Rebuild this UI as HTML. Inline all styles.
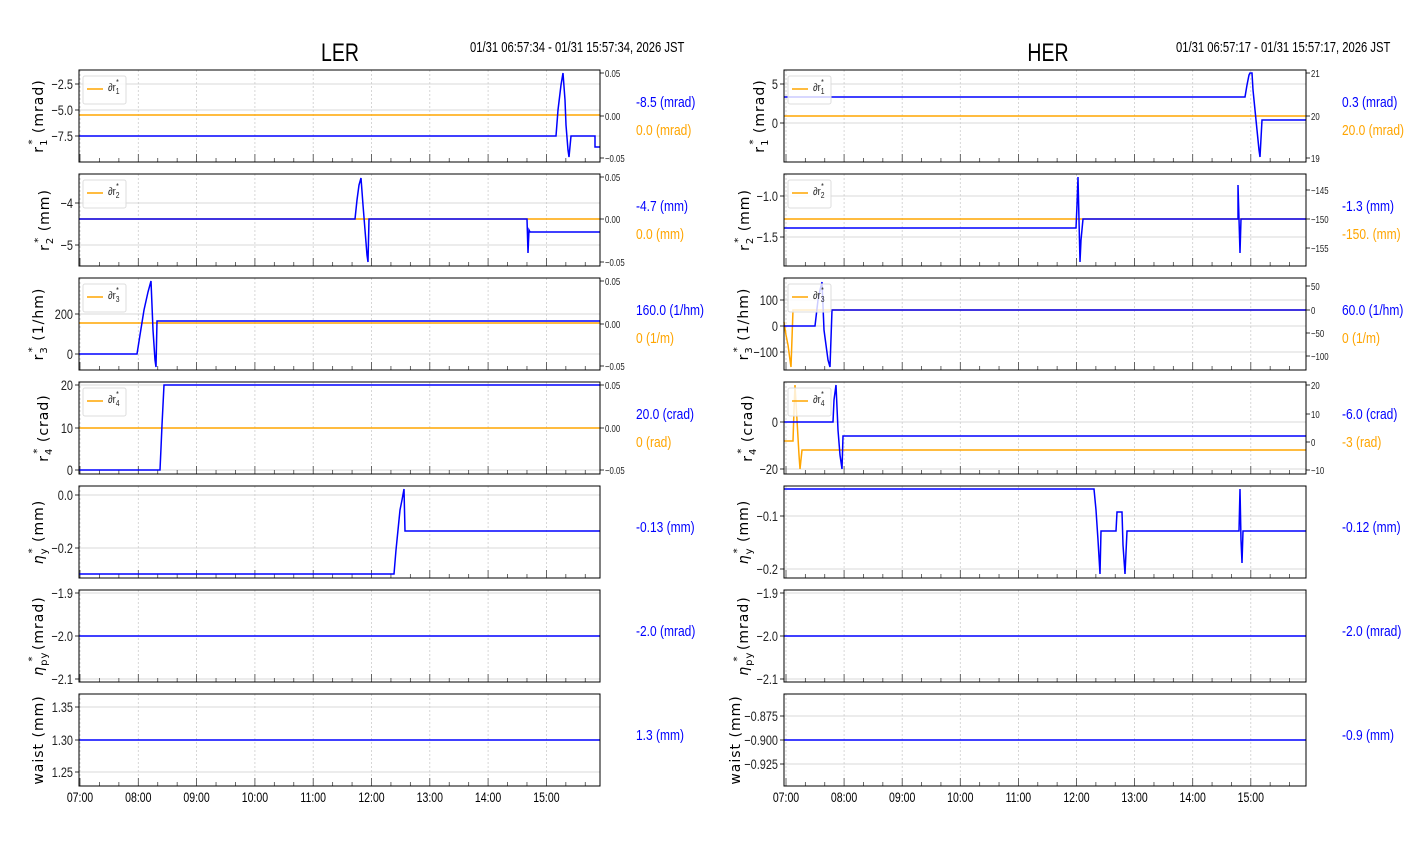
<!DOCTYPE html>
<html><head><meta charset="utf-8"><style>
html,body{margin:0;padding:0;background:#fff;width:1412px;height:864px;overflow:hidden}
svg text{font-family:"Liberation Sans",sans-serif}
</style></head><body>
<svg id="s" width="1412" height="864" xmlns="http://www.w3.org/2000/svg"></svg>
<script>
var o='';
function T(x,y,t,sz,fill,anchor,extra){o+='<text x="'+x+'" y="'+y+'" font-size="'+sz+'" fill="'+(fill||'#000')+'" text-anchor="'+(anchor||'start')+'" '+(extra||'')+'>'+t+'</text>';}
function S(x,y,k){return 'transform="translate('+x+','+y+') scale('+k+',1) translate('+(-x)+','+(-y)+')"';}
var H=92;
function panel(x0,x1,top,ly,ry,blue,orange,legend,vals,ylab,t7,hw,xl){
  var y1=top+H;
  for(var h=0;h<9;h++){var x=t7+h*hw;o+='<line x1="'+x+'" y1="'+top+'" x2="'+x+'" y2="'+y1+'" stroke="#ccc" stroke-width="0.8" stroke-dasharray="2,2"/>';}
  ly.forEach(function(a){o+='<line x1="'+x0+'" y1="'+a[0]+'" x2="'+x1+'" y2="'+a[0]+'" stroke="#ccc" stroke-width="0.8"/>';
    o+='<line x1="'+(x0-4)+'" y1="'+a[0]+'" x2="'+x0+'" y2="'+a[0]+'" stroke="#000" stroke-width="0.8"/>';
    T(x0-6,a[0]+5,a[1],14,'#222','end',S(x0-6,a[0]+5,0.78));});
  for(var m=0;m<27;m++){var x=t7+m*hw/3;if(x>x1)break;var L=(m%3==0)?8:4;o+='<line x1="'+x+'" y1="'+y1+'" x2="'+x+'" y2="'+(y1-L)+'" stroke="#444" stroke-width="0.8"/>';}
  if(orange)o+='<polyline points="'+orange+'" fill="none" stroke="#ffa500" stroke-width="1.5"/>';
  o+='<polyline points="'+blue+'" fill="none" stroke="#0000ff" stroke-width="1.5"/>';
  o+='<rect x="'+x0+'" y="'+top+'" width="'+(x1-x0)+'" height="'+H+'" fill="none" stroke="#000" stroke-width="1"/>';
  if(ry)ry.forEach(function(a){o+='<line x1="'+x1+'" y1="'+a[0]+'" x2="'+(x1+4)+'" y2="'+a[0]+'" stroke="#000" stroke-width="0.8"/>';
    T(x1+5,a[0]+4,a[1],10,'#222','start',S(x1+5,a[0]+4,0.78));});
  if(legend){o+='<rect x="'+(x0+4)+'" y="'+(top+6)+'" width="43" height="28" rx="2" fill="#fff" fill-opacity="0.8" stroke="#ddd"/>';
    o+='<line x1="'+(x0+8)+'" y1="'+(top+19)+'" x2="'+(x0+24)+'" y2="'+(top+19)+'" stroke="#ffa500" stroke-width="1.5"/>';
    T(x0+29,top+21,'∂r<tspan font-size="8" dy="3">'+legend+'</tspan><tspan font-size="8" dx="-4" dy="-9">*</tspan>',11,'#222','start',S(x0+29,top+21,0.85));}
  var vx=x1+36;
  if(vals.length==2){T(vx,top+37,vals[0],15,'#0000ff','start',S(vx,top+37,0.8));
    T(vx,top+65,vals[1],15,'#ffa500','start',S(vx,top+65,0.8));}
  else T(vx,top+46,vals[0],15,'#0000ff','start',S(vx,top+46,0.8));
  var cy=top+H/2;o+='<text x="0" y="0" font-size="14" fill="#000" text-anchor="middle" style="font-family:DejaVu Sans,sans-serif;letter-spacing:1px" transform="translate('+xl+','+cy+') rotate(-90)">'+ylab+'</text>';
}
function sup(b,s){return b+'<tspan font-size="10" dy="4">'+s+'</tspan><tspan font-size="10" dx="-6" dy="-12">*</tspan><tspan dy="8"> </tspan>';}
var eta1='<tspan font-style="italic">η</tspan><tspan font-size="10" dy="4">y</tspan><tspan font-size="10" dx="-6" dy="-12">*</tspan><tspan dy="8"> </tspan>(mm)';
var eta2='<tspan font-style="italic">η</tspan><tspan font-size="10" dy="4">py</tspan><tspan font-size="10" dx="-10" dy="-12">*</tspan><tspan dy="8"> </tspan>(mrad)';
var X0=79,X1=600,t7=80,hw=58.3;
panel(X0,X1,70,[[84,'−2.5'],[110,'−5.0'],[136,'−7.5']],[[73,'0.05'],[116,'0.00'],[158,'−0.05']],
 '79,136 556,136 558,110 561,85 563,73 565,100 566,125 568,150 569,157 571,136 595,136 595,147 600,147','79,115 600,115','1',['-8.5 (mrad)','0.0 (mrad)'],sup('r','1')+'(mrad)',t7,hw,43);
panel(X0,X1,174,[[203,'−4'],[245,'−5']],[[177,'0.05'],[219,'0.00'],[262,'−0.05']],
 '79,219 355,219 357,200 359,185 361,178 363,205 365,230 367,255 368,262 369,219 527,219 528,253 529,230 530,232 600,232','79,219 600,219','2',['-4.7 (mm)','0.0 (mm)'],sup('r','2')+'(mm)',t7,hw,49);
panel(X0,X1,278,[[314,'200'],[354,'0']],[[281,'0.05'],[324,'0.00'],[366,'−0.05']],
 '79,354 137,354 140,335 144,310 148,292 151,281 153,330 155,360 156,367 157,321 600,321','79,323 600,323','3',['160.0 (1/hm)','0 (1/m)'],sup('r','3')+'(1/hm)',t7,hw,43);
panel(X0,X1,382,[[385,'20'],[428,'10'],[470,'0']],[[385,'0.05'],[428,'0.00'],[470,'−0.05']],
 '79,470 160,470 161,448 162,425 163,405 164,385 600,385','79,428 600,428','4',['20.0 (crad)','0 (rad)'],sup('r','4')+'(crad)',t7,hw,48);
panel(X0,X1,486,[[495,'0.0'],[548,'−0.2']],null,
 '79,574 394,574 396,550 398,530 400,510 402,500 404,489 405,531 600,531',null,null,['-0.13 (mm)'],eta1,t7,hw,43);
panel(X0,X1,590,[[593,'−1.9'],[636,'−2.0'],[679,'−2.1']],null,'79,636 600,636',null,null,['-2.0 (mrad)'],eta2,t7,hw,43);
panel(X0,X1,694,[[707,'1.35'],[740,'1.30'],[772,'1.25']],null,'79,740 600,740',null,null,['1.3 (mm)'],'waist (mm)',t7,hw,43);
X0=784;X1=1306;t7=786;hw=58.1;
panel(X0,X1,70,[[84,'5'],[123,'0']],[[73,'21'],[116,'20'],[158,'19']],
 '784,97 1245,97 1247,85 1249,75 1250,73 1252,73 1253,90 1255,110 1257,130 1259,150 1260,157 1262,120 1306,120','784,116 1306,116','1',['0.3 (mrad)','20.0 (mrad)'],sup('r','1')+'(mrad)',t7,hw,764);
panel(X0,X1,174,[[196,'−1.0'],[237,'−1.5']],[[190,'−145'],[219,'−150'],[248,'−155']],
 '784,228 1076,228 1077,205 1078,177 1079,220 1080,262 1081,240 1083,219 1238,219 1238,185 1239,219 1240,253 1241,219 1306,219','784,219 1306,219','2',['-1.3 (mm)','-150. (mm)'],sup('r','2')+'(mm)',t7,hw,749);
panel(X0,X1,278,[[300,'100'],[326,'0'],[352,'−100']],[[286,'50'],[310,'0'],[333,'−50'],[356,'−100']],
 '784,326 815,326 818,300 820,290 822,282 824,330 826,345 828,360 830,367 832,310 1306,310','784,322 786,335 788,345 790,360 791,367 793,310 1306,310','3',['60.0 (1/hm)','0 (1/m)'],sup('r','3')+'(1/hm)',t7,hw,748);
panel(X0,X1,382,[[422,'0'],[469,'−20']],[[385,'20'],[414,'10'],[442,'0'],[470,'−10']],
 '784,422 833,422 834,400 836,385 838,430 840,455 842,469 843,436 1306,436','784,441 793,441 794,410 795,385 797,420 799,455 800,469 802,450 1306,450','4',['-6.0 (crad)','-3 (rad)'],sup('r','4')+'(crad)',t7,hw,752);
panel(X0,X1,486,[[516,'−0.1'],[569,'−0.2']],null,
 '784,489 1094,489 1096,510 1098,540 1100,574 1101,531 1116,531 1117,512 1122,512 1123,545 1125,574 1127,531 1239,531 1240,489 1241,540 1242,563 1243,531 1306,531',null,null,['-0.12 (mm)'],eta1,t7,hw,748);
panel(X0,X1,590,[[593,'−1.9'],[636,'−2.0'],[679,'−2.1']],null,'784,636 1306,636',null,null,['-2.0 (mrad)'],eta2,t7,hw,748);
panel(X0,X1,694,[[716,'−0.875'],[740,'−0.900'],[764,'−0.925']],null,'784,740 1306,740',null,null,['-0.9 (mm)'],'waist (mm)',t7,hw,740);
function sc(x,y,t,sz,anc,k){T(x,y,t,sz,'#000',anc,S(x,y,k||0.8));}
sc(340,61,'LER',25,'middle',0.78);sc(1048,61,'HER',25,'middle',0.78);
sc(470,52,'01/31 06:57:34 - 01/31 15:57:34, 2026 JST',15,'start',0.75);
sc(1176,52,'01/31 06:57:17 - 01/31 15:57:17, 2026 JST',15,'start',0.75);
var hrs=['07:00','08:00','09:00','10:00','11:00','12:00','13:00','14:00','15:00'];
for(var i=0;i<9;i++){sc(80+i*58.3,802,hrs[i],13.5,'middle',0.78);sc(786+i*58.1,802,hrs[i],13.5,'middle',0.78);}
document.getElementById('s').innerHTML=o;
</script>
</body></html>
